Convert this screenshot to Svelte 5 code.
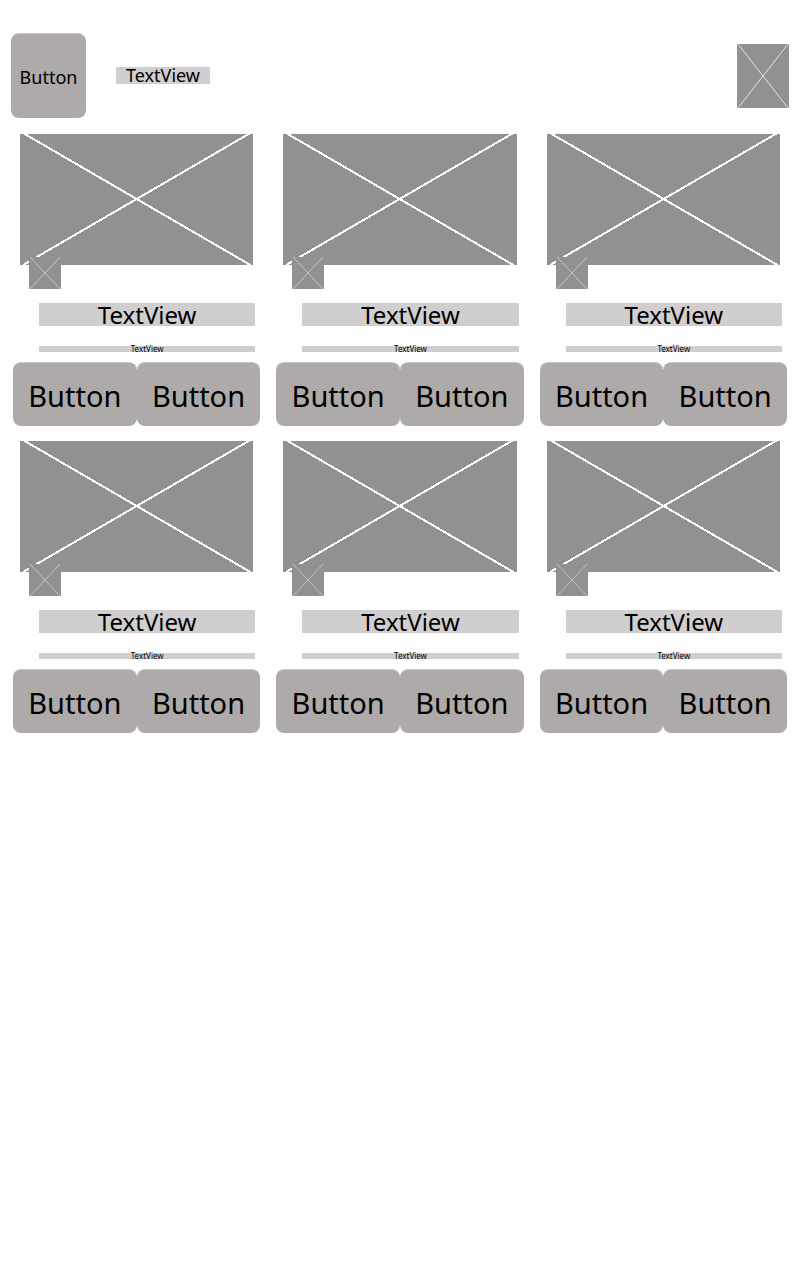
<script>
  const cards = [1, 2, 3, 4, 5, 6];
</script>

{#snippet cross(w, h, kind)}
  <svg class={kind} viewBox="0 0 {w} {h}" preserveAspectRatio="none" shape-rendering={kind === 'photo' ? 'crispEdges' : 'auto'} aria-hidden="true">
    {#if kind === 'photo'}
      <path d="M3 -1L{w - 3} {h}M{w - 3} -1L3 {h}" />
    {:else}
      <path d="M1 0L{w - 1} {h}M{w - 1} 0L1 {h}" />
    {/if}
  </svg>
{/snippet}

<header>
  <button class="back">Button</button>
  <span class="title">TextView</span>
  {@render cross(52, 64, 'logo')}
</header>

<main>
  {#each cards as card (card)}
    <article>
      <div class="media">
        {@render cross(233, 131, 'photo')}
        <div class="badge">{@render cross(32, 32, 'mini')}</div>
      </div>
      <div class="text name">TextView</div>
      <div class="text detail">TextView</div>
      <div class="actions">
        <button>Button</button>
        <button>Button</button>
      </div>
    </article>
  {/each}
</main>

<style>
  :global(body) {
    margin: 0;
    background: #fefefe;
    color: #000;
    font-family: "Noto Sans", "Open Sans", sans-serif;
  }

  header {
    display: flex;
    align-items: center;
    padding: 33px 11px 16px;
  }

  button {
    box-sizing: border-box;
    border: 0;
    border-top: 1px solid #c8c5c5;
    border-radius: 8px;
    margin: 0;
    padding: 2px 0 0;
    background: #aeaaa9;
    color: #000;
    font-family: inherit;
    font-size: 29px;
    line-height: 40px;
    text-align: center;
  }

  .back {
    width: 75px;
    height: 85px;
    font-size: 18px;
  }

  .title {
    width: 94px;
    height: 17px;
    margin-left: 30px;
    background: #d0cecf;
    font-size: 18px;
    line-height: 17px;
    text-align: center;
  }

  svg {
    display: block;
    background: #919191;
    fill: none;
  }

  .logo {
    width: 52px;
    height: 64px;
    margin-left: auto;
    stroke: #e4e4e4;
    stroke-width: 1;
  }

  main {
    display: grid;
    grid-template-columns: repeat(3, minmax(0, 1fr));
    gap: 15px 16px;
    padding: 0 13px;
  }

  .media {
    position: relative;
    margin: 0 7px 38px;
  }

  .photo {
    width: 100%;
    height: 131px;
    stroke: #fff;
    stroke-width: 2;
  }

  .badge {
    position: absolute;
    left: 9px;
    bottom: -24px;
  }

  .mini {
    width: 32px;
    height: 32px;
    stroke: #c4c4c4;
    stroke-width: 1;
  }

  .text {
    margin: 0 5px 0 26px;
    background: #d0cecf;
    text-align: center;
  }

  .name {
    height: 23px;
    margin-bottom: 20px;
    font-size: 24px;
    line-height: 23px;
  }

  .detail {
    height: 6px;
    margin-bottom: 10px;
    font-size: 8px;
    line-height: 6px;
  }

  .actions {
    display: grid;
    grid-template-columns: 1fr 1fr;
  }

  .actions button {
    height: 64px;
  }
</style>
